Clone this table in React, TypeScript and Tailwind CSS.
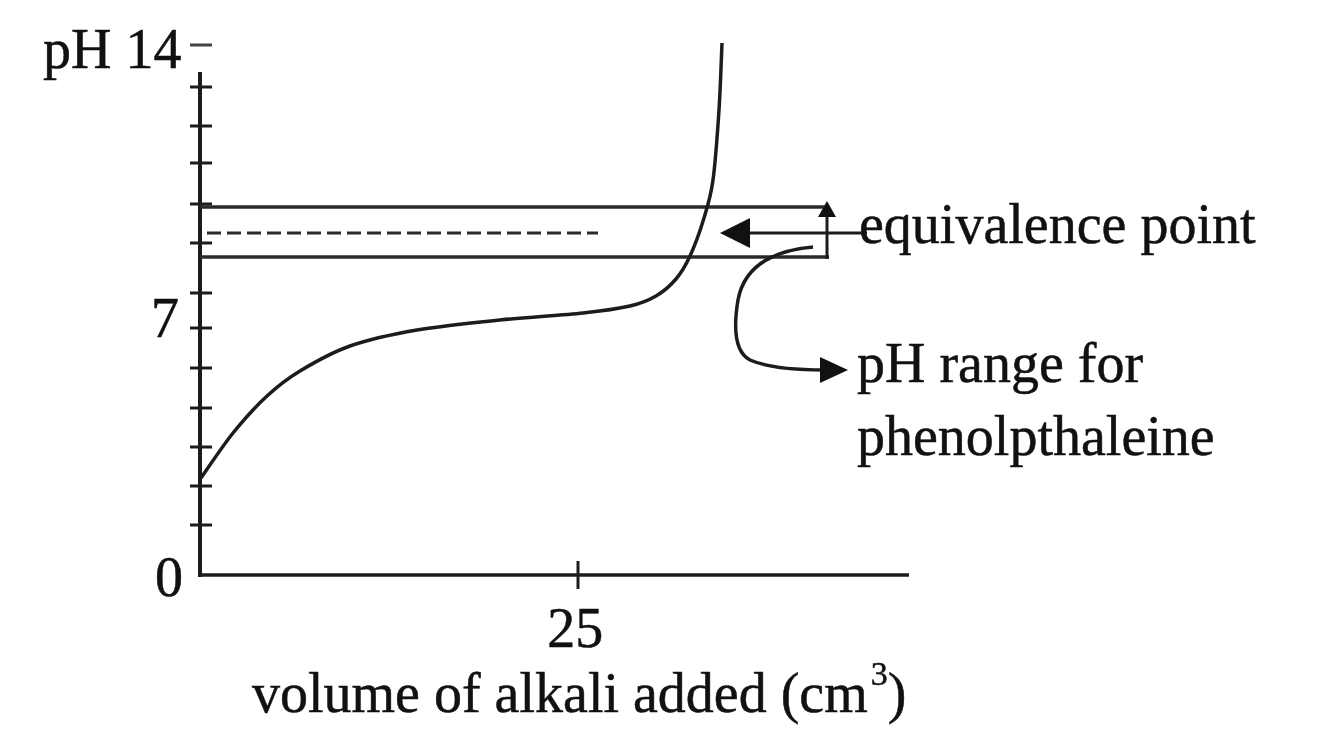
import React from "react";

// y positions of the small ticks on the pH axis, read off the original figure
const yTicks = [87, 126, 163, 204, 243, 293, 328, 368, 408, 447, 486, 525];

// points along the titration curve; joined with a catmull-rom spline below
const curvePts: [number, number][] = [
  [201, 478], [233, 433], [267, 396], [300, 371], [350, 346], [417, 330],
  [500, 320], [583, 313], [630, 306], [656, 296], [676, 279], [690, 256],
  [704, 218], [713, 180], [719, 110], [722, 43],
];

function splinePath(pts: [number, number][]) {
  let d = `M${pts[0][0]},${pts[0][1]}`;
  for (let i = 0; i < pts.length - 1; i++) {
    const p0 = pts[i - 1] || pts[i];
    const p1 = pts[i];
    const p2 = pts[i + 1];
    const p3 = pts[i + 2] || p2;
    const c1x = p1[0] + (p2[0] - p0[0]) / 6;
    const c1y = p1[1] + (p2[1] - p0[1]) / 6;
    const c2x = p2[0] - (p3[0] - p1[0]) / 6;
    const c2y = p2[1] - (p3[1] - p1[1]) / 6;
    d += ` C${c1x.toFixed(1)},${c1y.toFixed(1)} ${c2x.toFixed(1)},${c2y.toFixed(1)} ${p2[0]},${p2[1]}`;
  }
  return d;
}

const serif = "font-['Liberation_Serif',serif] text-[56px] text-[#111] [-webkit-text-stroke:0.5px_#111]";

function Curves() {
  return (
    <svg className="absolute inset-0" width="1343" height="744" viewBox="0 0 1343 744" fill="none">
      <g stroke="#1c1c1c" strokeLinecap="butt">
        {/* axes */}
        <line x1="200" y1="72" x2="200" y2="577" strokeWidth="4" />
        <line x1="198" y1="575" x2="909" y2="575" strokeWidth="3.5" />
        <line x1="190" y1="45" x2="212" y2="45" strokeWidth="3" stroke="#444" />
        {yTicks.map((y) => (
          <line key={y} x1="190" y1={y} x2="212" y2={y} strokeWidth="3" />
        ))}
        <line x1="578" y1="561" x2="578" y2="589" strokeWidth="3" />

        {/* indicator range band */}
        <line x1="200" y1="207" x2="829" y2="207" strokeWidth="3.5" stroke="#2a2a2a" />
        <line x1="200" y1="257" x2="829" y2="257" strokeWidth="3.5" stroke="#2a2a2a" />
        <line x1="207" y1="233" x2="598" y2="233" strokeWidth="3" strokeDasharray="14 6" stroke="#2a2a2a" />
        <line x1="827" y1="214" x2="827" y2="259" strokeWidth="3" />

        {/* titration curve */}
        <path d={splinePath(curvePts)} strokeWidth="3.5" />

        {/* pointer to the equivalence point */}
        <line x1="746" y1="233" x2="867" y2="233" strokeWidth="3" />

        {/* curved pointer to the phenolphthalein label */}
        <path
          d="M813,247 C780,250 745,262 738,300 C733,330 735,352 750,360 C768,368 795,370 824,370"
          strokeWidth="3.5"
        />
      </g>
      <g fill="#111">
        <polygon points="720,233 750,218 750,248" />
        <polygon points="827,201 818,217 836,217" />
        <polygon points="848,370 820,357 820,383" />
      </g>
    </svg>
  );
}

export default function App() {
  return (
    <div className="relative w-[1343px] h-[744px] overflow-hidden bg-white blur-[0.4px]">
      <Curves />

      {/* pH axis labels */}
      <span className={`absolute left-[43px] top-[21px] leading-none ${serif}`}>pH 14</span>
      <span className={`absolute left-[151px] top-[290px] leading-none ${serif}`}>7</span>
      <span className={`absolute left-[155px] top-[549px] leading-none ${serif}`}>0</span>

      {/* volume axis labels */}
      <div className={`absolute left-[252px] top-[596px] flex flex-col items-center leading-[65px] whitespace-nowrap ${serif}`}>
        <span className="-ml-[8px]">25</span>
        <span>
          volume of alkali added (cm<span className="relative -top-[27px] ml-[3px] text-[34px]">3</span>)
        </span>
      </div>

      {/* annotations */}
      <div className={`absolute left-[857px] top-[188px] flex flex-col leading-[73px] whitespace-nowrap ${serif}`}>
        <span className="ml-[2px]">equivalence point</span>
        <span className="mt-[66px]">pH range for</span>
        <span>phenolpthaleine</span>
      </div>
    </div>
  );
}
